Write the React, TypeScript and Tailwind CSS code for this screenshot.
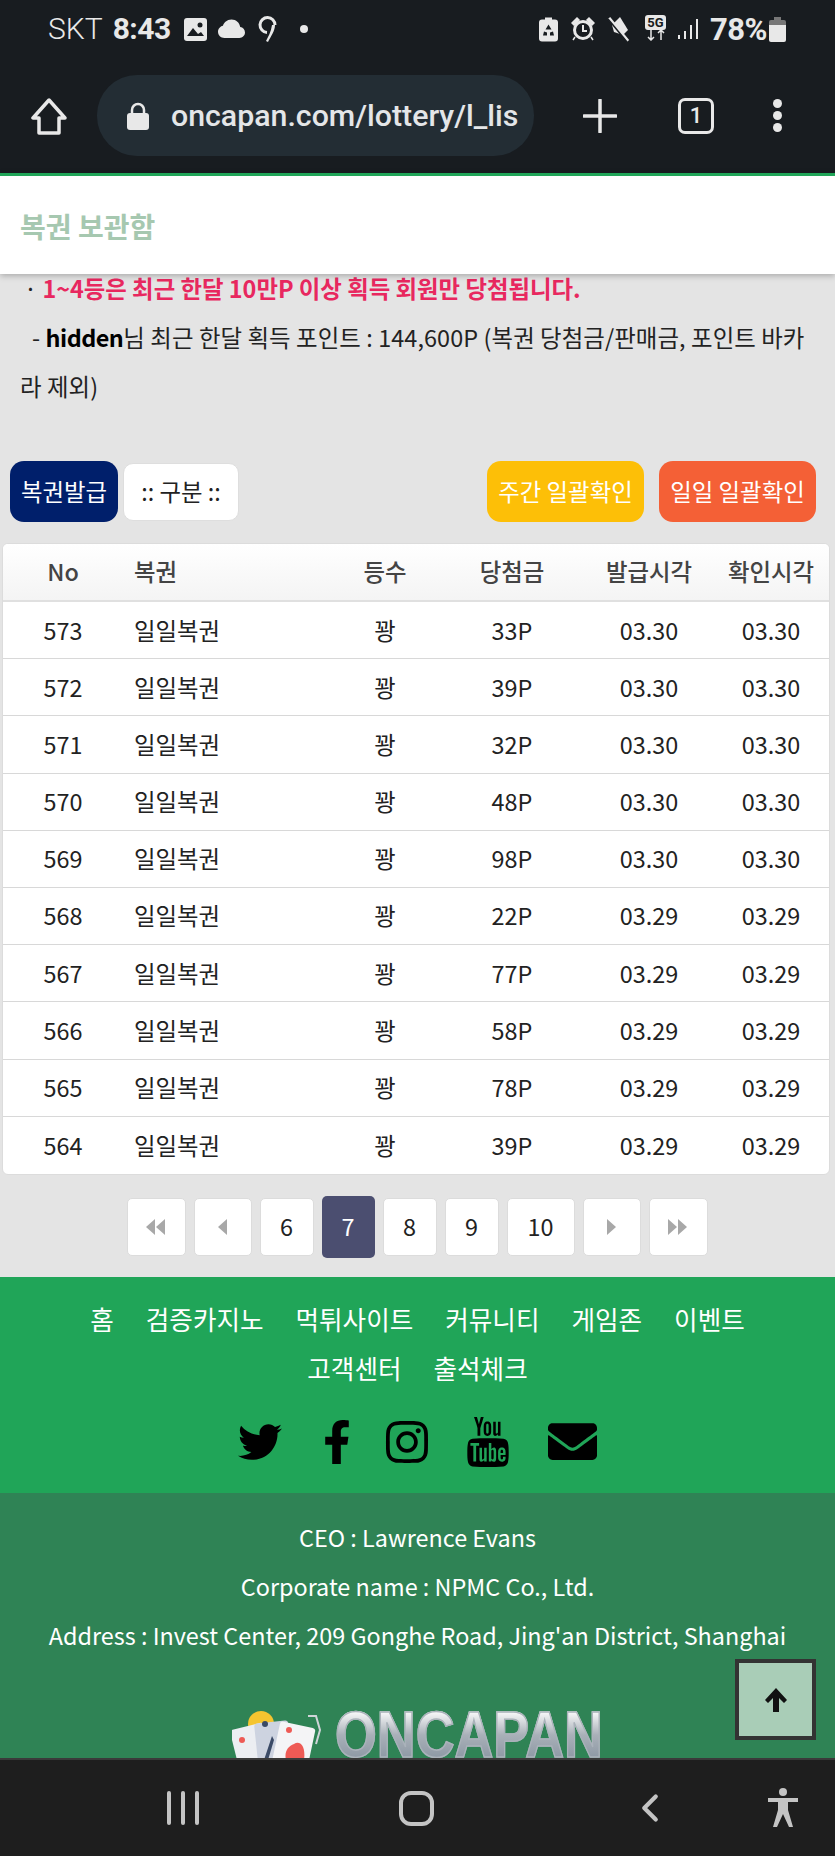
import { ChevronLeft } from "lucide-react";
import { BsCloudFill } from "react-icons/bs";
import { FaEnvelope, FaFacebookF, FaInstagram, FaTwitter } from "react-icons/fa";
import { TfiYoutube } from "react-icons/tfi";

const rows = [
  ["573", "33P", "03.30"],
  ["572", "39P", "03.30"],
  ["571", "32P", "03.30"],
  ["570", "48P", "03.30"],
  ["569", "98P", "03.30"],
  ["568", "22P", "03.29"],
  ["567", "77P", "03.29"],
  ["566", "58P", "03.29"],
  ["565", "78P", "03.29"],
  ["564", "39P", "03.29"],
];

const gridCols = "grid grid-cols-[120px_200px_124px_130px_144px_100px] items-center";

function StatusIcons() {
  return (
    <div className="flex items-center text-[#e8e8e8]">
      {/* battery saver */}
      <svg width="19" height="25" viewBox="0 0 19 24" className="mr-[13px]">
        <path d="M6 0h7v2h3a3 3 0 0 1 3 3v16a3 3 0 0 1-3 3H3a3 3 0 0 1-3-3V5a3 3 0 0 1 3-3h3z" fill="#e8e8e8" />
        <path d="M9.500 7l-3 5h6zM5 14l-1 4h4v-3zM14 14l1 4h-4v-3z" fill="#181c20" />
      </svg>
      {/* alarm */}
      <svg width="24" height="26" viewBox="0 0 24 24" className="mr-[12px]">
        <circle cx="12" cy="13" r="8.500" fill="none" stroke="#e8e8e8" strokeWidth="3" />
        <path d="M12 8v6h4" fill="none" stroke="#e8e8e8" strokeWidth="2" />
        <path d="M1 6l5-5 2 2-5 5zM23 6l-5-5-2 2 5 5zM4 20l-2 3M20 20l2 3" fill="#e8e8e8" stroke="#e8e8e8" strokeWidth="1.500" />
      </svg>
      {/* mute */}
      <svg width="24" height="26" viewBox="0 0 24 26" className="mr-[12px]">
        <path d="M5 9l8-8 8 13-5 5-9-3z" fill="#e8e8e8" />
        <path d="M2 2l19 23" stroke="#e8e8e8" strokeWidth="3" />
        <path d="M1 3l19 23" stroke="#181c20" strokeWidth="1.500" />
      </svg>
      {/* 5G */}
      <div className="mr-[8px] flex h-[28px] w-[25px] flex-col items-center">
        <div className="rounded-[3px] bg-[#e8e8e8] px-[2px] text-[13px] leading-[15px] font-bold text-[#181c20]">5G</div>
        <svg width="22" height="11" viewBox="0 0 22 11">
          <path d="M6 0v10M3 7l3 3 3-3M16 10V0M13 3l3-3 3 3" fill="none" stroke="#e8e8e8" strokeWidth="1.500" />
        </svg>
      </div>
      {/* signal */}
      <svg width="24" height="24" viewBox="0 0 24 24" className="mr-[10px]">
        <path d="M2 18h2v4H2zM8 14h2v8H8zM14 8h2v14h-2zM20 2h2v20h-2z" fill="#e8e8e8" />
      </svg>
      <span className="text-[31px] leading-none font-bold tracking-[-0.5px]">78%</span>
      {/* battery */}
      <svg width="17" height="25" viewBox="0 0 17 25" className="ml-[2px]">
        <path d="M5 0h7v3H5z" fill="#777" />
        <path d="M2 3h13a2 2 0 0 1 2 2v3H0V5a2 2 0 0 1 2-2z" fill="#777" />
        <path d="M0 8h17v15a2 2 0 0 1-2 2H2a2 2 0 0 1-2-2z" fill="#e8e8e8" />
      </svg>
    </div>
  );
}

function StatusBar() {
  return (
    <div className="flex h-[58px] items-center justify-between pr-[49px] pl-[48px] text-[#e8e8e8]">
      <div className="flex items-center">
        <span className="text-[30px] leading-none font-light">SKT</span>
        <span className="ml-[10px] text-[30px] leading-none font-bold tracking-[-0.5px]">8:43</span>
        <svg width="23" height="23" viewBox="0 0 23 23" className="ml-[13px]">
          <rect width="23" height="23" rx="3" fill="#e8e8e8" />
          <circle cx="16" cy="7" r="2.500" fill="#181c20" />
          <path d="M3 18l6-8 5 6 3-2 3 4z" fill="#181c20" />
        </svg>
        <BsCloudFill size={27} className="ml-[11px]" />
        <svg width="20" height="28" viewBox="0 0 20 28" className="ml-[13px]">
          <path d="M9 17.500A7.500 7.500 0 1 1 17 10" fill="none" stroke="#e8e8e8" strokeWidth="3" />
          <path d="M17 10c0 6-4 11-7 17l-2-1c2-4 5-9 6-16z" fill="#e8e8e8" />
        </svg>
        <span className="ml-[22px] h-[8px] w-[8px] rounded-full bg-[#e8e8e8]" />
      </div>
      <StatusIcons />
    </div>
  );
}

function Toolbar() {
  return (
    <div className="flex h-[115px] items-start pt-[17px] pl-[31px] text-[#e8e8e8]">
      <svg width="36" height="37" viewBox="0 0 36 37" className="mt-[23px]">
        <path d="M18 2L2 20h6v15h20V20h6z" fill="none" stroke="#e8e8e8" strokeWidth="3.500" strokeLinejoin="round" />
      </svg>
      <div className="ml-[30px] flex h-[81px] w-[437px] items-center overflow-hidden rounded-[40px] bg-[#232d34] pl-[30px]">
        <svg width="22" height="28" viewBox="0 0 22 28" className="shrink-0">
          <path d="M5 12V8a6 6 0 0 1 12 0v4" fill="none" stroke="#e8e8e8" strokeWidth="2.500" />
          <rect y="11" width="22" height="17" rx="3" fill="#e8e8e8" />
        </svg>
        <span className="ml-[22px] text-[30.300px] font-medium whitespace-nowrap text-[#e4e6e8]">oncapan.com/lottery/l_lis</span>
      </div>
      <svg width="34" height="34" viewBox="0 0 34 34" className="mt-[24px] ml-[49px]">
        <path d="M17 1v32M1 17h32" stroke="#e8e8e8" strokeWidth="3.500" strokeLinecap="round" />
      </svg>
      <div className="mt-[23px] ml-[61px] flex h-[36px] w-[36px] items-center justify-center rounded-[7px] border-[3px] border-[#e8e8e8] text-[22px] leading-none font-medium">
        1
      </div>
      <div className="mt-[24px] ml-[59px] flex flex-col gap-[3px]">
        <span className="h-[9px] w-[9px] rounded-full bg-[#e8e8e8]" />
        <span className="h-[9px] w-[9px] rounded-full bg-[#e8e8e8]" />
        <span className="h-[9px] w-[9px] rounded-full bg-[#e8e8e8]" />
      </div>
    </div>
  );
}

function Triangle({ dir, double }: { dir: "left" | "right"; double?: boolean }) {
  const tri = dir === "left" ? "M9 0v16L0 8z" : "M0 0v16l9-8z";
  return (
    <svg width={double ? 20 : 10} height="18" viewBox={double ? "0 0 20 16" : "0 0 10 16"}>
      <path d={tri} fill="#a8a8a8" />
      {double && <path d={tri} fill="#a8a8a8" transform="translate(10 0)" />}
    </svg>
  );
}

function Pagination() {
  const btn = "flex h-[58px] items-center justify-center rounded-[5px] border border-[#dcdcdc] bg-white";
  return (
    <div className="mt-[23px] flex h-[58px] items-center justify-center gap-[8px] pr-[1px] text-[#222]">
      <div className={`${btn} w-[59px]`}><Triangle dir="left" double /></div>
      <div className={`${btn} w-[58px]`}><Triangle dir="left" /></div>
      <div className={`${btn} w-[54px]`}>6</div>
      <div className="flex h-[62px] w-[53px] items-center justify-center rounded-[5px] bg-[#4b4e70] text-white">7</div>
      <div className={`${btn} w-[54px]`}>8</div>
      <div className={`${btn} w-[54px]`}>9</div>
      <div className={`${btn} w-[68px]`}>10</div>
      <div className={`${btn} w-[58px]`}><Triangle dir="right" /></div>
      <div className={`${btn} w-[59px]`}><Triangle dir="right" double /></div>
    </div>
  );
}

function Footer() {
  return (
    <>
      <div className="mt-[21px] h-[216px] bg-[#20a558] pt-[17px] text-white">
        <div className="flex flex-wrap justify-center gap-x-[32px] text-[25.600px] leading-[49px]">
          <span>홈</span>
          <span>검증카지노</span>
          <span>먹튀사이트</span>
          <span>커뮤니티</span>
          <span>게임존</span>
          <span>이벤트</span>
          <span className="basis-full" />
          <span>고객센터</span>
          <span>출석체크</span>
        </div>
        <div className="mt-[25px] flex items-center justify-center text-black">
          <FaTwitter size={44} />
          <FaFacebookF size={44} className="ml-[33px]" />
          <FaInstagram size={48} className="ml-[24px]" />
          <TfiYoutube size={50} className="ml-[32px]" />
          <FaEnvelope size={49} className="ml-[35px]" />
        </div>
      </div>
      <div className="relative flex-1 overflow-hidden bg-[#2f8355] pt-[20px] text-center leading-[49px] text-white">
        <p>CEO : Lawrence Evans</p>
        <p>Corporate name : NPMC Co., Ltd.</p>
        <p>Address : Invest Center, 209 Gonghe Road, Jing'an District, Shanghai</p>
        <div className="mt-[50px] flex h-[60px] items-start pl-[232px]">
          <svg width="90" height="50" viewBox="0 0 90 50" className="shrink-0">
            <circle cx="29" cy="14" r="13" fill="#f4c430" />
            <rect x="2" y="16" width="34" height="40" rx="3" fill="#eceef2" transform="rotate(-14 18 36)" />
            <rect x="24" y="12" width="34" height="42" rx="3" fill="#cdd3e0" transform="rotate(-6 40 32)" />
            <rect x="44" y="14" width="36" height="42" rx="3" fill="#f4f4f6" transform="rotate(12 60 34)" />
            <path d="M76 6h8l4 14-4 14" fill="none" stroke="#cfd4d8" strokeWidth="2" />
            <path d="M62 34c6-4 12 2 10 16H54c-2-8 2-14 8-16z" fill="#ee5a55" />
            <path d="M40 26l-8 24 4 0 6-20z" fill="#3a4a66" />
            <circle cx="10" cy="30" r="3" fill="#ee5a55" />
            <circle cx="33" cy="14" r="3" fill="#3a4a66" />
            <circle cx="57" cy="20" r="3" fill="#ee5a55" />
          </svg>
          <span className="ml-[13px] origin-left scale-x-[0.84] bg-gradient-to-b from-white via-[#a9b0b8] to-[#8b97a3] bg-clip-text font-['Liberation_Sans',sans-serif] text-[64px] leading-[50px] font-bold whitespace-nowrap text-transparent [-webkit-text-stroke:1.500px_#aab2ba]">
            ONCAPAN
          </span>
        </div>
      </div>
    </>
  );
}

export default function App() {
  return (
    <div className="relative flex h-[1856px] w-[835px] flex-col overflow-hidden bg-[#e4e4e4] font-['Noto_Sans_CJK_KR','Noto_Sans',sans-serif] text-[23.400px] text-[#222]">
      <div className="h-[173px] shrink-0 bg-[#181c20] font-['Roboto',sans-serif]">
        <StatusBar />
        <Toolbar />
      </div>
      <div className="relative z-10 h-[101px] shrink-0 border-t-[3px] border-[#20a558] bg-white pt-[32px] pl-[20px] shadow-[0_2px_6px_rgba(0,0,0,0.25)]">
        <h1 className="text-[28px] leading-[36px] font-bold text-[#a6c8b0]">복권 보관함</h1>
      </div>

      <div className="flex min-h-0 flex-1 flex-col">
        <div className="-mt-[10px] pr-[24px] pl-[20px] leading-[49px]">
          <p className="pl-[4px] whitespace-nowrap">
            · <span className="font-bold text-[#e8285f]">1~4등은 최근 한달 10만P 이상 획득 회원만 당첨됩니다.</span>
          </p>
          <p className="tracking-[0.1px]">
            <span className="ml-[12px]">- </span>
            <span className="font-bold tracking-[-0.5px] text-black">hidden</span>님 최근 한달 획득 포인트 : 144,600P (복권 당첨금/판매금, 포인트 바카라 제외)
          </p>
        </div>

        <div className="mt-[50px] flex h-[61px] items-center px-[10px]">
          <div className="flex h-[61px] w-[108px] items-center justify-center rounded-[14px] bg-[#001f6b] text-white">복권발급</div>
          <div className="ml-[5px] flex h-[58px] w-[116px] items-center justify-center rounded-[10px] border border-[#dedede] bg-white text-[#222]">:: 구분 ::</div>
          <div className="ml-auto flex h-[61px] w-[157px] items-center justify-center rounded-[14px] bg-[#fdbf07] text-white">주간 일괄확인</div>
          <div className="mr-[9px] ml-[15px] flex h-[61px] w-[157px] items-center justify-center rounded-[14px] bg-[#f46036] text-white">일일 일괄확인</div>
        </div>

        <div className="mx-[2px] mt-[21px] w-[828px] overflow-hidden rounded-[6px] border border-[#dcdcdc] bg-white">
          <div className={`${gridCols} h-[58px] border-b-2 border-[#e0e0e0] bg-gradient-to-b from-white to-[#f4f4f4] text-center font-medium text-[#444]`}>
            <div>No</div>
            <div className="pl-[11px] text-left">복권</div>
            <div>등수</div>
            <div>당첨금</div>
            <div>발급시각</div>
            <div>확인시각</div>
          </div>
          {rows.map(([no, prize, date]) => (
            <div key={no} className={`${gridCols} h-[57.200px] border-b border-[#d8d8d8] text-center last:border-b-0`}>
              <div>{no}</div>
              <div className="pl-[11px] text-left">일일복권</div>
              <div>꽝</div>
              <div>{prize}</div>
              <div>{date}</div>
              <div>{date}</div>
            </div>
          ))}
        </div>

        <Pagination />
        <Footer />
      </div>

      <div className="flex h-[98px] shrink-0 items-center border-t-2 border-[#3a3a3a] bg-[#1e1e1e] text-[#c4c4c4]">
        <div className="ml-[167px] flex gap-[10px]">
          <span className="h-[34px] w-[4px] rounded-full bg-[#c4c4c4]" />
          <span className="h-[34px] w-[4px] rounded-full bg-[#c4c4c4]" />
          <span className="h-[34px] w-[4px] rounded-full bg-[#c4c4c4]" />
        </div>
        <div className="ml-[200px] h-[35px] w-[35px] rounded-[12px] border-[4px] border-[#c4c4c4]" />
        <ChevronLeft size={46} strokeWidth={2.2} className="ml-[193px]" />
        <svg width="32" height="40" viewBox="0 0 32 40" className="ml-[94px]">
          <circle cx="16" cy="4" r="4" fill="#c4c4c4" />
          <path d="M1 10h30v4H21v8l5 17h-4l-6-13-6 13H6l5-17v-8H1z" fill="#c4c4c4" />
        </svg>
      </div>

      {/* scroll to top */}
      <div className="absolute top-[1659px] left-[735px] z-20 flex h-[81px] w-[81px] items-center justify-center border-[4px] border-[#333] bg-[#a9cdb7]">
        <svg width="26" height="26" viewBox="0 0 26 26">
          <path d="M13 1L2 13l3 3 5-5v14h6V11l5 5 3-3z" fill="#111" />
        </svg>
      </div>
    </div>
  );
}
